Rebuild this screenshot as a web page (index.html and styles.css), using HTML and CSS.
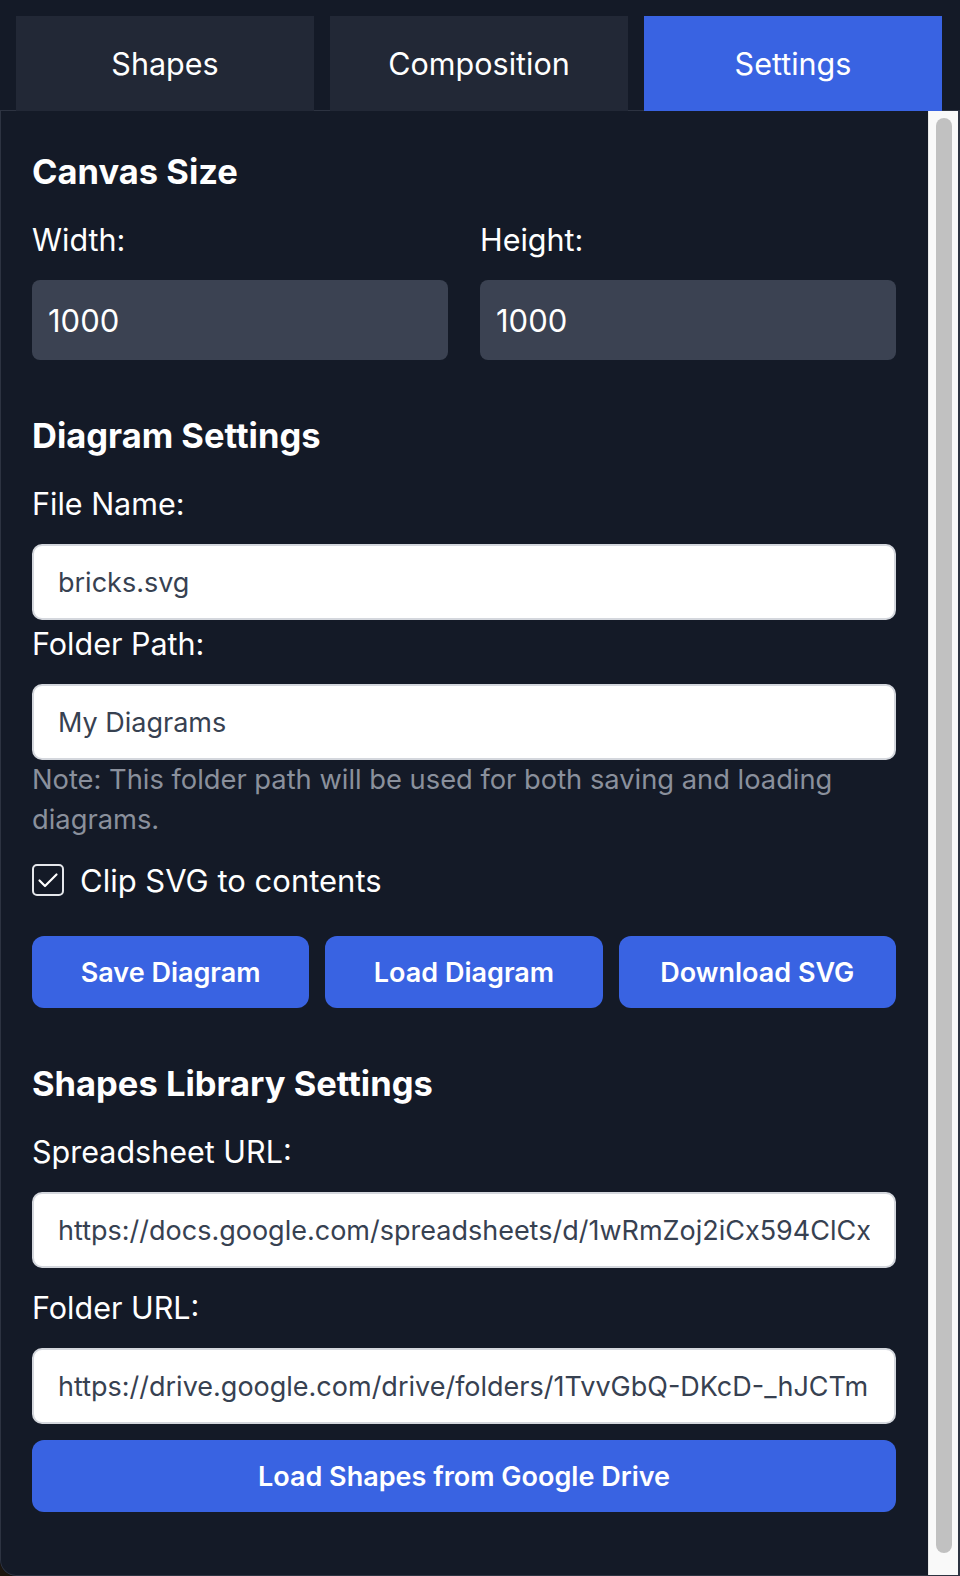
FILE: index.html
```html
<!DOCTYPE html>
<html lang="en">
<head>
<meta charset="utf-8">
<title>Settings</title>
<link rel="stylesheet" href="styles.css">
</head>
<body>
<div class="app">
  <nav class="tabs">
    <button class="tab">Shapes</button>
    <button class="tab">Composition</button>
    <button class="tab tab-active">Settings</button>
  </nav>
  <div class="panel">
    <div class="panel-content">
      <section class="section">
        <h3 class="heading">Canvas Size</h3>
        <div class="size-grid">
          <div class="field">
            <label class="label">Width:</label>
            <input class="input-dark" type="text" value="1000">
          </div>
          <div class="field">
            <label class="label">Height:</label>
            <input class="input-dark" type="text" value="1000">
          </div>
        </div>
      </section>

      <section class="section">
        <h3 class="heading">Diagram Settings</h3>
        <label class="label">File Name:</label>
        <input class="input-light" type="text" value="bricks.svg">
        <label class="label">Folder Path:</label>
        <input class="input-light" type="text" value="My Diagrams">
        <p class="note">Note: This folder path will be used for both saving and loading diagrams.</p>
        <label class="check-row">
          <span class="checkbox">
            <svg viewBox="0 0 32 32" width="32" height="32" aria-hidden="true">
              <rect x="1" y="1" width="30" height="30" rx="4" fill="none" stroke="#e5e7eb" stroke-width="2"/>
              <path d="M7.5 16.5 L13 22 L24.5 10.5" fill="none" stroke="#ffffff" stroke-width="2.2" stroke-linecap="round" stroke-linejoin="round"/>
            </svg>
          </span>
          Clip SVG to contents
        </label>
        <div class="btn-row">
          <button class="btn">Save Diagram</button>
          <button class="btn">Load Diagram</button>
          <button class="btn">Download SVG</button>
        </div>
      </section>

      <section class="section section-last">
        <h3 class="heading">Shapes Library Settings</h3>
        <div class="group">
          <label class="label">Spreadsheet URL:</label>
          <input class="input-light" type="text" value="https://docs.google.com/spreadsheets/d/1wRmZoj2iCx594ClCxQeRkT7vH2pLmN8aZ/edit">
        </div>
        <div class="group">
          <label class="label">Folder URL:</label>
          <input class="input-light" type="text" value="https://drive.google.com/drive/folders/1TvvGbQ-DKcD-_hJCTm">
        </div>
        <button class="btn btn-wide">Load Shapes from Google Drive</button>
      </section>
    </div>
    <div class="scrollbar" aria-hidden="true">
      <div class="scroll-thumb"></div>
    </div>
  </div>
</div>
</body>
</html>
```

FILE: styles.css
```css
* { box-sizing: border-box; }

html, body {
  margin: 0;
  padding: 0;
  background: #1c160e;
}

body {
  font-family: Inter, "Liberation Sans", sans-serif;
  color: #ffffff;
}

.app {
  width: 960px;
  height: 1576px;
  background: #141a27;
  border-bottom-left-radius: 16px;
  display: flex;
  flex-direction: column;
  overflow: hidden;
}

.tabs {
  display: flex;
  gap: 16px;
  padding: 16px 18px 0 16px;
  margin-bottom: -1px;
  position: relative;
  z-index: 1;
}

.tab {
  flex: 1;
  height: 95px;
  border: 0;
  margin: 0;
  background: #222836;
  color: #ffffff;
  font-family: Inter, "Liberation Sans", sans-serif;
  font-size: 30.5px;
  font-weight: 400;
  padding: 0;
}

.tab-active {
  background: #3963e2;
}

.panel {
  flex: 1;
  min-height: 0;
  display: flex;
  border: 1px solid #2d3341;
  border-right-width: 2px;
  border-bottom-left-radius: 16px;
  overflow: hidden;
}

.panel-content {
  flex: 1;
  min-width: 0;
  padding: 33px 32px 0 31px;
}

.scrollbar {
  width: 30px;
  flex: none;
  display: flex;
  flex-direction: column;
  background: #f9f9f9;
  border-left: 1px solid #e8e8e8;
  padding: 7px 6px 22px 7px;
}

.scroll-thumb {
  flex: 1;
  background: #c1c1c1;
  border-radius: 8px;
}

.section {
  margin-bottom: 48px;
}

.section-last {
  margin-bottom: 0;
}

.heading {
  margin: 0 0 16px 0;
  font-size: 34.5px;
  line-height: 56px;
  font-weight: 700;
}

.size-grid {
  display: grid;
  grid-template-columns: 1fr 1fr;
  gap: 32px;
}

.field {
  display: flex;
  flex-direction: column;
}

.label {
  display: block;
  font-size: 30.5px;
  line-height: 48px;
  margin-bottom: 16px;
  color: #ffffff;
}

.input-dark {
  display: block;
  width: 100%;
  height: 80px;
  border: 0;
  border-radius: 8px;
  background: #3b4252;
  color: #ffffff;
  font-family: Inter, "Liberation Sans", sans-serif;
  font-size: 31px;
  padding: 0 16px;
  outline: none;
}

.input-light {
  display: block;
  width: 100%;
  height: 76px;
  border: 2px solid #d4d7dd;
  border-radius: 10px;
  background: #ffffff;
  color: #374151;
  font-family: Inter, "Liberation Sans", sans-serif;
  font-size: 27px;
  padding: 0 24px;
  outline: none;
}

.group {
  margin-bottom: 16px;
}

.note {
  margin: 0;
  font-size: 27.3px;
  line-height: 40px;
  color: #8a909c;
}

.check-row {
  display: flex;
  align-items: center;
  gap: 16px;
  margin-top: 16px;
  height: 48px;
  font-size: 31px;
}

.checkbox {
  display: flex;
  width: 32px;
  height: 32px;
}

.btn-row {
  display: grid;
  grid-template-columns: repeat(3, 1fr);
  gap: 16px;
  margin-top: 32px;
}

.btn {
  height: 72px;
  border: 0;
  border-radius: 12px;
  background: #3963e2;
  color: #ffffff;
  font-family: Inter, "Liberation Sans", sans-serif;
  font-size: 27px;
  font-weight: 600;
  padding: 0;
}

.btn-wide {
  display: block;
  width: 100%;
}
```
